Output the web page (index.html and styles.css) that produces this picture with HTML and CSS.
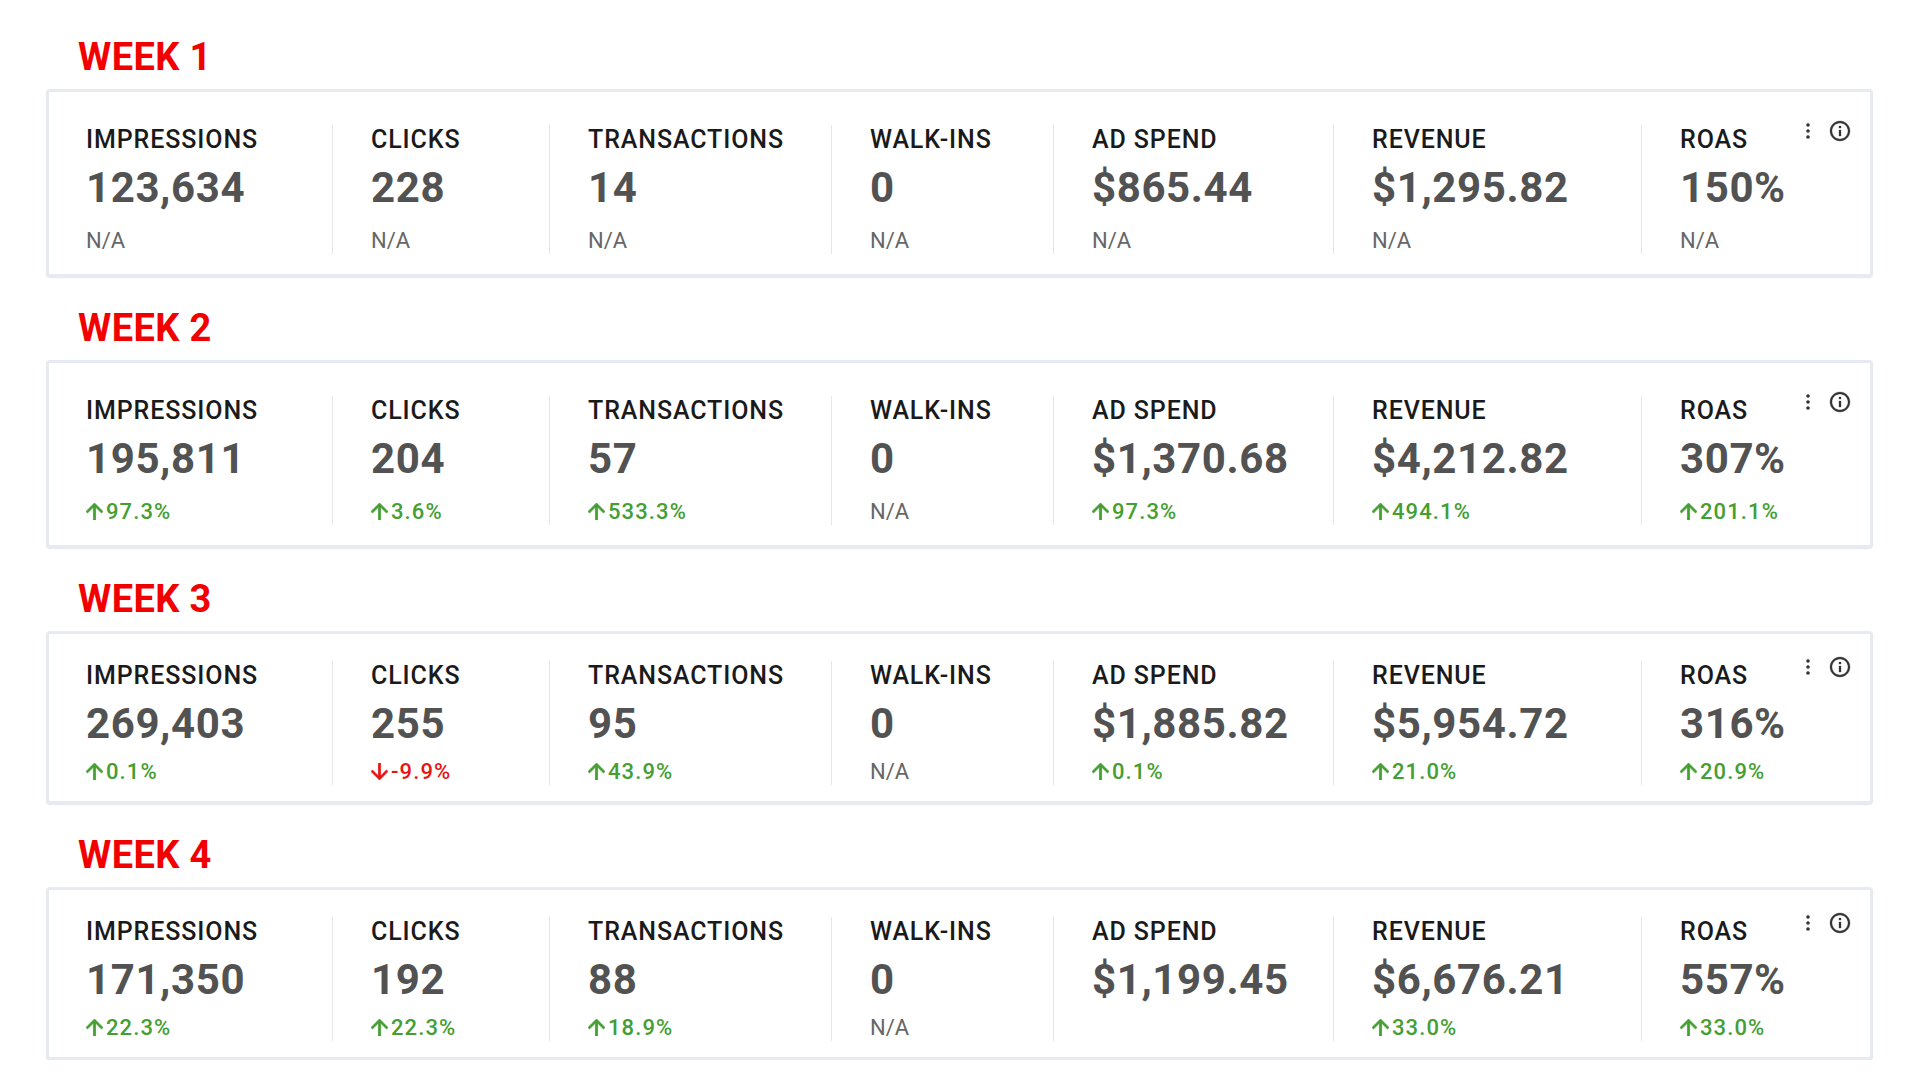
FILE: index.html
```html
<!DOCTYPE html>
<html lang="en">
<head>
<meta charset="utf-8">
<title>Weekly Performance</title>
<link rel="stylesheet" href="styles.css">
</head>
<body>
<main class="page">

  <section class="week">
    <h2 class="week-title">WEEK 1</h2>
    <div class="card">
      <div class="metric"><div class="metric-head"><span class="label">IMPRESSIONS</span></div><div class="value">123,634</div><div class="sub">N/A</div></div>
      <div class="metric"><div class="metric-head"><span class="label">CLICKS</span></div><div class="value">228</div><div class="sub">N/A</div></div>
      <div class="metric"><div class="metric-head"><span class="label">TRANSACTIONS</span></div><div class="value">14</div><div class="sub">N/A</div></div>
      <div class="metric"><div class="metric-head"><span class="label">WALK-INS</span></div><div class="value">0</div><div class="sub">N/A</div></div>
      <div class="metric"><div class="metric-head"><span class="label">AD SPEND</span></div><div class="value">$865.44</div><div class="sub">N/A</div></div>
      <div class="metric"><div class="metric-head"><span class="label">REVENUE</span></div><div class="value">$1,295.82</div><div class="sub">N/A</div></div>
      <div class="metric metric-last"><div class="metric-head"><span class="label">ROAS</span>
        <span class="tools">
          <svg class="tool" viewBox="0 0 24 24"><circle cx="12" cy="6" r="1.8"/><circle cx="12" cy="12" r="1.8"/><circle cx="12" cy="18" r="1.8"/></svg>
          <svg class="tool tool-info" viewBox="0 0 24 24"><path d="M11 7h2v2h-2zm0 4h2v6h-2zm1-9C6.48 2 2 6.48 2 12s4.48 10 10 10 10-4.48 10-10S17.52 2 12 2zm0 18c-4.41 0-8-3.59-8-8s3.59-8 8-8 8 3.59 8 8-3.59 8-8 8z"/></svg>
        </span></div><div class="value">150%</div><div class="sub">N/A</div></div>
    </div>
  </section>

  <section class="week">
    <h2 class="week-title">WEEK 2</h2>
    <div class="card">
      <div class="metric"><div class="metric-head"><span class="label">IMPRESSIONS</span></div><div class="value">195,811</div><div class="sub up"><svg class="arrow" viewBox="4 4 16 16"><path d="M4 12l1.41 1.41L11 7.83V20h2V7.83l5.58 5.59L20 12l-8-8-8 8z"/></svg>97.3%</div></div>
      <div class="metric"><div class="metric-head"><span class="label">CLICKS</span></div><div class="value">204</div><div class="sub up"><svg class="arrow" viewBox="4 4 16 16"><path d="M4 12l1.41 1.41L11 7.83V20h2V7.83l5.58 5.59L20 12l-8-8-8 8z"/></svg>3.6%</div></div>
      <div class="metric"><div class="metric-head"><span class="label">TRANSACTIONS</span></div><div class="value">57</div><div class="sub up"><svg class="arrow" viewBox="4 4 16 16"><path d="M4 12l1.41 1.41L11 7.83V20h2V7.83l5.58 5.59L20 12l-8-8-8 8z"/></svg>533.3%</div></div>
      <div class="metric"><div class="metric-head"><span class="label">WALK-INS</span></div><div class="value">0</div><div class="sub">N/A</div></div>
      <div class="metric"><div class="metric-head"><span class="label">AD SPEND</span></div><div class="value">$1,370.68</div><div class="sub up"><svg class="arrow" viewBox="4 4 16 16"><path d="M4 12l1.41 1.41L11 7.83V20h2V7.83l5.58 5.59L20 12l-8-8-8 8z"/></svg>97.3%</div></div>
      <div class="metric"><div class="metric-head"><span class="label">REVENUE</span></div><div class="value">$4,212.82</div><div class="sub up"><svg class="arrow" viewBox="4 4 16 16"><path d="M4 12l1.41 1.41L11 7.83V20h2V7.83l5.58 5.59L20 12l-8-8-8 8z"/></svg>494.1%</div></div>
      <div class="metric metric-last"><div class="metric-head"><span class="label">ROAS</span>
        <span class="tools">
          <svg class="tool" viewBox="0 0 24 24"><circle cx="12" cy="6" r="1.8"/><circle cx="12" cy="12" r="1.8"/><circle cx="12" cy="18" r="1.8"/></svg>
          <svg class="tool tool-info" viewBox="0 0 24 24"><path d="M11 7h2v2h-2zm0 4h2v6h-2zm1-9C6.48 2 2 6.48 2 12s4.48 10 10 10 10-4.48 10-10S17.52 2 12 2zm0 18c-4.41 0-8-3.59-8-8s3.59-8 8-8 8 3.59 8 8-3.59 8-8 8z"/></svg>
        </span></div><div class="value">307%</div><div class="sub up"><svg class="arrow" viewBox="4 4 16 16"><path d="M4 12l1.41 1.41L11 7.83V20h2V7.83l5.58 5.59L20 12l-8-8-8 8z"/></svg>201.1%</div></div>
    </div>
  </section>

  <section class="week">
    <h2 class="week-title">WEEK 3</h2>
    <div class="card card-compact">
      <div class="metric"><div class="metric-head"><span class="label">IMPRESSIONS</span></div><div class="value">269,403</div><div class="sub up"><svg class="arrow" viewBox="4 4 16 16"><path d="M4 12l1.41 1.41L11 7.83V20h2V7.83l5.58 5.59L20 12l-8-8-8 8z"/></svg>0.1%</div></div>
      <div class="metric"><div class="metric-head"><span class="label">CLICKS</span></div><div class="value">255</div><div class="sub down"><svg class="arrow" viewBox="4 4 16 16"><path d="M20 12l-1.41-1.41L13 16.17V4h-2v12.17l-5.58-5.59L4 12l8 8 8-8z"/></svg>-9.9%</div></div>
      <div class="metric"><div class="metric-head"><span class="label">TRANSACTIONS</span></div><div class="value">95</div><div class="sub up"><svg class="arrow" viewBox="4 4 16 16"><path d="M4 12l1.41 1.41L11 7.83V20h2V7.83l5.58 5.59L20 12l-8-8-8 8z"/></svg>43.9%</div></div>
      <div class="metric"><div class="metric-head"><span class="label">WALK-INS</span></div><div class="value">0</div><div class="sub">N/A</div></div>
      <div class="metric"><div class="metric-head"><span class="label">AD SPEND</span></div><div class="value">$1,885.82</div><div class="sub up"><svg class="arrow" viewBox="4 4 16 16"><path d="M4 12l1.41 1.41L11 7.83V20h2V7.83l5.58 5.59L20 12l-8-8-8 8z"/></svg>0.1%</div></div>
      <div class="metric"><div class="metric-head"><span class="label">REVENUE</span></div><div class="value">$5,954.72</div><div class="sub up"><svg class="arrow" viewBox="4 4 16 16"><path d="M4 12l1.41 1.41L11 7.83V20h2V7.83l5.58 5.59L20 12l-8-8-8 8z"/></svg>21.0%</div></div>
      <div class="metric metric-last"><div class="metric-head"><span class="label">ROAS</span>
        <span class="tools">
          <svg class="tool" viewBox="0 0 24 24"><circle cx="12" cy="6" r="1.8"/><circle cx="12" cy="12" r="1.8"/><circle cx="12" cy="18" r="1.8"/></svg>
          <svg class="tool tool-info" viewBox="0 0 24 24"><path d="M11 7h2v2h-2zm0 4h2v6h-2zm1-9C6.48 2 2 6.48 2 12s4.48 10 10 10 10-4.48 10-10S17.52 2 12 2zm0 18c-4.41 0-8-3.59-8-8s3.59-8 8-8 8 3.59 8 8-3.59 8-8 8z"/></svg>
        </span></div><div class="value">316%</div><div class="sub up"><svg class="arrow" viewBox="4 4 16 16"><path d="M4 12l1.41 1.41L11 7.83V20h2V7.83l5.58 5.59L20 12l-8-8-8 8z"/></svg>20.9%</div></div>
    </div>
  </section>

  <section class="week">
    <h2 class="week-title">WEEK 4</h2>
    <div class="card card-compact">
      <div class="metric"><div class="metric-head"><span class="label">IMPRESSIONS</span></div><div class="value">171,350</div><div class="sub up"><svg class="arrow" viewBox="4 4 16 16"><path d="M4 12l1.41 1.41L11 7.83V20h2V7.83l5.58 5.59L20 12l-8-8-8 8z"/></svg>22.3%</div></div>
      <div class="metric"><div class="metric-head"><span class="label">CLICKS</span></div><div class="value">192</div><div class="sub up"><svg class="arrow" viewBox="4 4 16 16"><path d="M4 12l1.41 1.41L11 7.83V20h2V7.83l5.58 5.59L20 12l-8-8-8 8z"/></svg>22.3%</div></div>
      <div class="metric"><div class="metric-head"><span class="label">TRANSACTIONS</span></div><div class="value">88</div><div class="sub up"><svg class="arrow" viewBox="4 4 16 16"><path d="M4 12l1.41 1.41L11 7.83V20h2V7.83l5.58 5.59L20 12l-8-8-8 8z"/></svg>18.9%</div></div>
      <div class="metric"><div class="metric-head"><span class="label">WALK-INS</span></div><div class="value">0</div><div class="sub">N/A</div></div>
      <div class="metric"><div class="metric-head"><span class="label">AD SPEND</span></div><div class="value">$1,199.45</div><div class="sub"></div></div>
      <div class="metric"><div class="metric-head"><span class="label">REVENUE</span></div><div class="value">$6,676.21</div><div class="sub up"><svg class="arrow" viewBox="4 4 16 16"><path d="M4 12l1.41 1.41L11 7.83V20h2V7.83l5.58 5.59L20 12l-8-8-8 8z"/></svg>33.0%</div></div>
      <div class="metric metric-last"><div class="metric-head"><span class="label">ROAS</span>
        <span class="tools">
          <svg class="tool" viewBox="0 0 24 24"><circle cx="12" cy="6" r="1.8"/><circle cx="12" cy="12" r="1.8"/><circle cx="12" cy="18" r="1.8"/></svg>
          <svg class="tool tool-info" viewBox="0 0 24 24"><path d="M11 7h2v2h-2zm0 4h2v6h-2zm1-9C6.48 2 2 6.48 2 12s4.48 10 10 10 10-4.48 10-10S17.52 2 12 2zm0 18c-4.41 0-8-3.59-8-8s3.59-8 8-8 8 3.59 8 8-3.59 8-8 8z"/></svg>
        </span></div><div class="value">557%</div><div class="sub up"><svg class="arrow" viewBox="4 4 16 16"><path d="M4 12l1.41 1.41L11 7.83V20h2V7.83l5.58 5.59L20 12l-8-8-8 8z"/></svg>33.0%</div></div>
    </div>
  </section>

</main>
</body>
</html>
```

FILE: styles.css
```css
* { box-sizing: border-box; }

html, body {
  margin: 0;
  padding: 0;
  background: #ffffff;
}

body {
  font-family: Roboto, "Liberation Sans", Arial, sans-serif;
  color: #1c1c1c;
}

.page {
  width: 1827px;
  margin-left: 46px;
  padding-top: 39px;
  display: flex;
  flex-direction: column;
  gap: 33px;
}

.week {
  display: flex;
  flex-direction: column;
}

.week-title {
  margin: 0 0 13px 32px;
  font-size: 38px;
  line-height: 37px;
  font-weight: 700;
  letter-spacing: 0.4px;
  color: #f20000;
}

.card {
  display: grid;
  grid-template-columns: 283px 217px 282px 222px 280px 308px 1fr;
  border: 3px solid #e8eaf1;
  border-radius: 4px;
  background: #ffffff;
  padding: 33px 0 20px;
  box-shadow: 0 1px 1px rgba(180, 186, 205, 0.35);
}

.card-compact {
  padding: 27px 0 16px;
}

.metric {
  display: flex;
  flex-direction: column;
  padding: 2px 0 2px 38px;
  border-left: 1px solid #e6e6e6;
}

.metric:first-child {
  border-left: none;
  padding-left: 37px;
}

.metric-last {
  padding-right: 18px;
}

.metric-head {
  display: flex;
  justify-content: space-between;
  align-items: flex-start;
  height: 25px;
}

.label {
  font-size: 25px;
  line-height: 25px;
  font-weight: 500;
  letter-spacing: 0.9px;
  color: #1a1a1a;
}

.tools {
  display: flex;
  gap: 8px;
  margin-top: -8px;
}

.tool {
  width: 24px;
  height: 24px;
  fill: #333333;
}

.tool-info {
  stroke: #333333;
  stroke-width: 0.3px;
}

.value {
  margin-top: 15px;
  font-size: 42px;
  line-height: 42px;
  font-weight: 700;
  letter-spacing: 0.6px;
  color: #525252;
}

.sub {
  margin-top: 21px;
  height: 22px;
  font-size: 22px;
  line-height: 22px;
  font-weight: 400;
  color: #666666;
  white-space: nowrap;
}

.card-compact .sub {
  margin-top: 16px;
}

.sub.up,
.sub.down {
  font-weight: 500;
  letter-spacing: 1.1px;
}

.sub.up { color: #449e32; }
.sub.down { color: #e81414; }

.arrow {
  width: 17px;
  height: 17px;
  margin-right: 3px;
  fill: currentColor;
  stroke: currentColor;
  stroke-width: 0.7px;
  vertical-align: -1px;
}
```
